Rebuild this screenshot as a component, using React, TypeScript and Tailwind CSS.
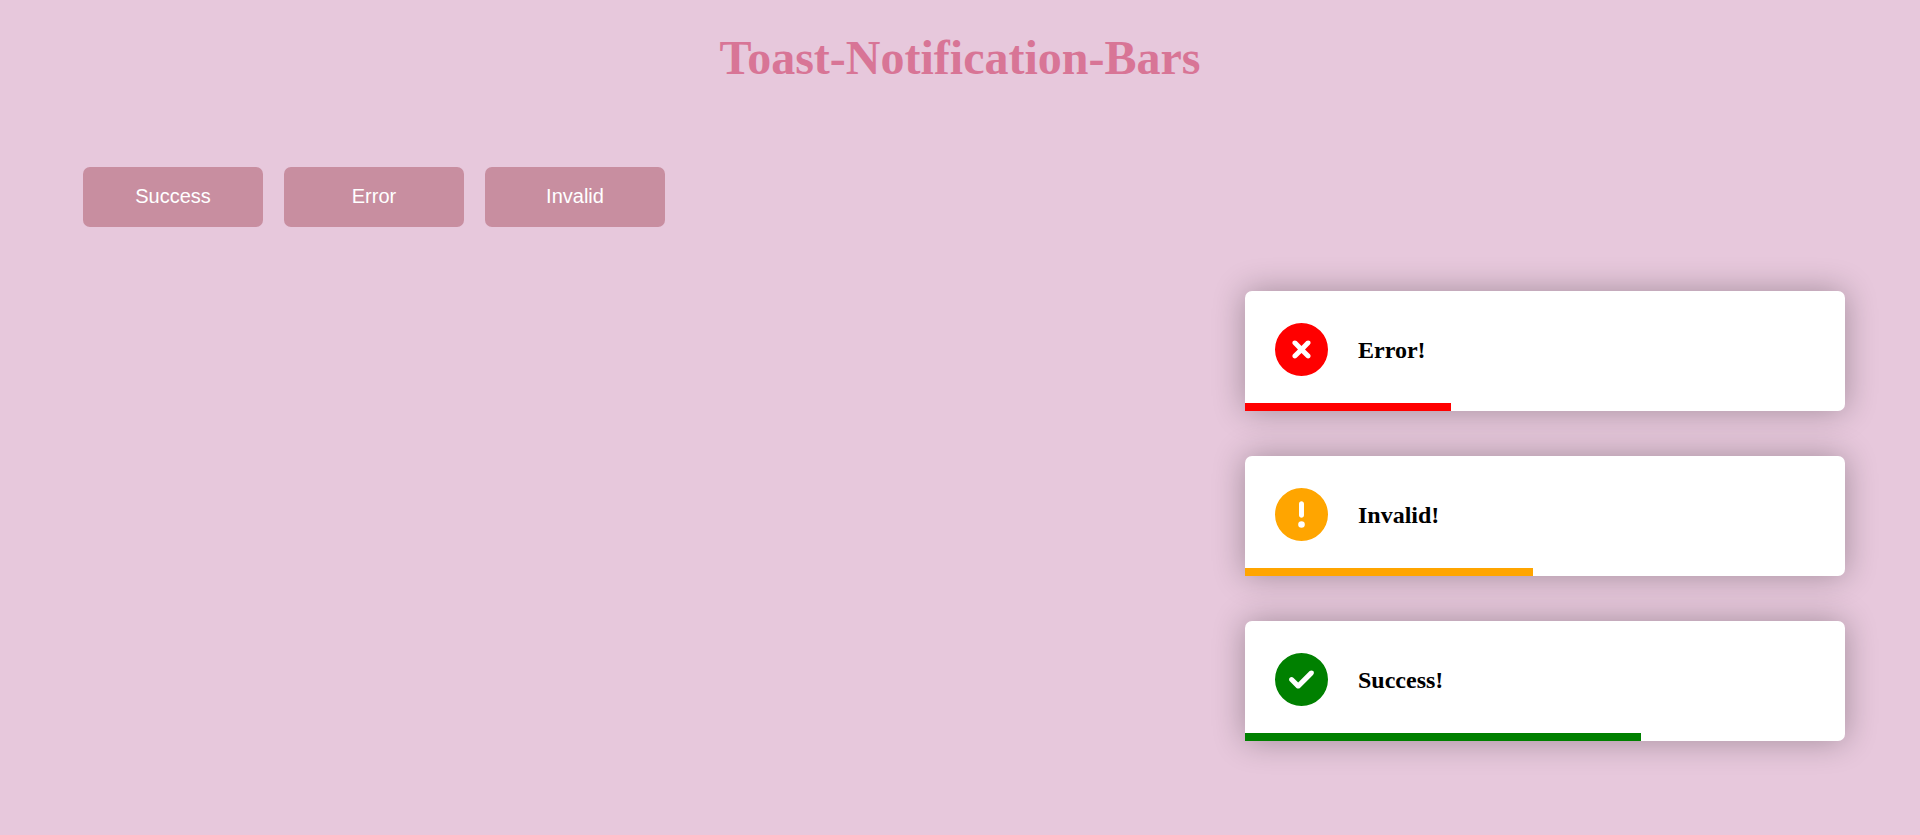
import { FaCircleCheck, FaCircleExclamation, FaCircleXmark } from "react-icons/fa6";
import type { IconType } from "react-icons";

type Toast = {
  message: string;
  Icon: IconType;
  iconClass: string;
  barClass: string;
  width: number;
};

const toasts: Toast[] = [
  { message: "Error!", Icon: FaCircleXmark, iconClass: "text-[#ff0000]", barClass: "bg-[#ff0000]", width: 34.33 },
  { message: "Invalid!", Icon: FaCircleExclamation, iconClass: "text-[#ffa500]", barClass: "bg-[#ffa500]", width: 48 },
  { message: "Success!", Icon: FaCircleCheck, iconClass: "text-[#008000]", barClass: "bg-[#008000]", width: 66 },
];

const actions = ["Success", "Error", "Invalid"];

function ToastCard({ message, Icon, iconClass, barClass, width }: Toast) {
  return (
    <div
      role="status"
      className="flex h-[120px] w-full max-w-[600px] flex-col rounded-[7px] rounded-bl-none bg-white shadow-[0_0_32px_rgba(0,0,0,0.3)]"
    >
      <div className="flex flex-1 items-center gap-[30px] px-[30px] pt-1">
        <Icon aria-hidden="true" className={`size-[53px] shrink-0 ${iconClass}`} />
        <p className="pt-0.5 text-2xl font-bold text-black">{message}</p>
      </div>
      <div className={`h-2 ${barClass}`} style={{ width: `${width}%` }} />
    </div>
  );
}

export default function App() {
  return (
    <main className="flex min-h-screen flex-col bg-[#e7c8dc] font-['Liberation_Serif',serif]">
      <h1 className="pt-[29px] text-center text-5xl leading-[58px] font-bold text-[#d87596]">
        Toast-Notification-Bars
      </h1>
      <div className="mt-20 flex flex-wrap gap-[21px] px-[83px]">
        {actions.map((label) => (
          <button
            key={label}
            type="button"
            className="h-[60px] w-[180px] cursor-pointer rounded-[7px] bg-[#c88ea0] pb-0.5 font-['Liberation_Sans',sans-serif] text-xl text-white"
          >
            {label}
          </button>
        ))}
      </div>
      <section aria-label="Notifications" className="mt-16 flex flex-col items-end gap-[45px] pr-[75px] pb-16">
        {toasts.map((toast) => (
          <ToastCard key={toast.message} {...toast} />
        ))}
      </section>
    </main>
  );
}
